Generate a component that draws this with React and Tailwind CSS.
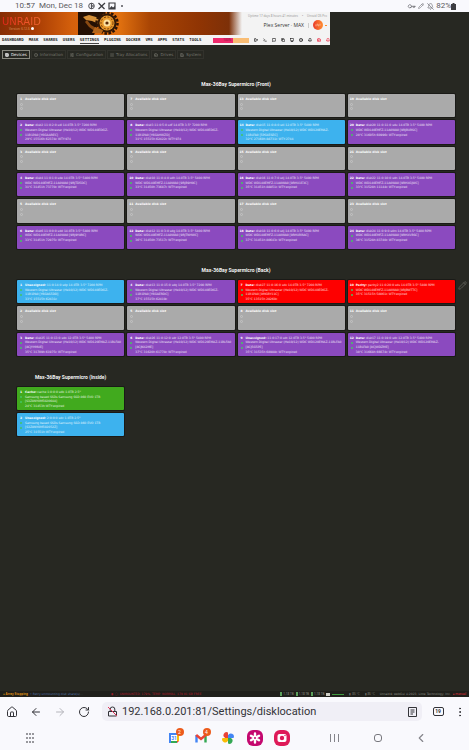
import React from "react";
import {
  Home, ArrowLeft, ArrowRight, RotateCw, MoreVertical, ChevronLeft, Pencil,
  LogOut, Terminal, MessageSquare, Copy, Monitor, Info, Bell, HardDrive,
  List, SlidersHorizontal, Grid3x3, Save, Key, BellOff,
} from "lucide-react";

const TONES = {
  empty: "bg-[#aaaaaa]",
  purple: "bg-[#8b4abf]",
  blue: "bg-[#3db2ee]",
  red: "bg-[#fe0000]",
  green: "bg-[#41aa1e]",
};

const e = (n) => ({ n, tone: "empty", label: "Available disk slot", lines: [""] });
const d = (n, tone, label, ...lines) => ({ n, tone, label, lines });

const HE10 = "Western Digital Ultrastar (He10/12) WDC WD140EDGZ-";

const front = [
  e(1), e(7), e(13), e(19),
  d(2, "purple", "Data:", 'disk2 11:0:2:0 sdl 14.0TB 3.5" 7200 RPM', HE10, "11B1PA0 [Y6GAAREC]", "29°C 15516h 62374c WTY:974"),
  d(8, "purple", "Data:", 'disk3 11:0:5:0 sdf 14.0TB 3.5" 7200 RPM', HE10, "11B1PA0 [Y6GAHWZD]", "31°C 15515h 62422c WTY:974"),
  d(14, "blue", "Data:", 'disk15 11:0:8:0 sdi 12.0TB 3.5" 5400 RPM', "Western Digital Ultrastar (He10/12) WDC WD120EMAZ-", "11BLFA0 [5PG4ESEC]", "32°C 27160h 88731c WTY:2744"),
  d(20, "purple", "Data:", 'disk20 11:0:11:0 sdu 14.0TB 3.5" 5400 RPM', "WDC WD140EMFZ-11A0WA0 [9RJBXRSC]", "28°C 31605h 60996c WTY:expired"),
  e(3), e(9), e(15), e(21),
  d(4, "purple", "Data:", 'disk4 11:0:1:0 sde 14.0TB 3.5" 5400 RPM', "WDC WD140EMFZ-11A0WA0 [9RJTD5DC]", "31°C 31451h 73770c WTY:expired"),
  d(10, "purple", "Data:", 'disk10 11:0:4:0 sdh 14.0TB 3.5" 5400 RPM', "WDC WD140EMFZ-11A0WA0 [9RJB9H0C]", "33°C 31450h 73687c WTY:expired"),
  d(16, "purple", "Data:", 'disk16 11:0:7:0 sdj 14.0TB 3.5" 5400 RPM', "WDC WD140EMFZ-11A0WA0 [9RHX1E3C]", "35°C 31451h 88851c WTY:expired"),
  d(22, "purple", "Data:", 'disk22 11:0:10:0 sdn 14.0TB 3.5" 5400 RPM', "WDC WD140EMFZ-11A0WA0 [9RHXGJWC]", "33°C 31528h 11144c WTY:expired"),
  e(5), e(11), e(17), e(23),
  d(6, "purple", "Data:", 'disk6 11:0:0:0 sdd 14.0TB 3.5" 5400 RPM', "WDC WD140EMFZ-11A0WA0 [9RJ9Y8RC]", "33°C 31451h 72975c WTY:expired"),
  d(12, "purple", "Data:", 'disk12 11:0:3:0 sdg 14.0TB 3.5" 5400 RPM', "WDC WD140EMFZ-11A0WA0 [9RJTNHWC]", "36°C 31450h 73517c WTY:expired"),
  d(18, "purple", "Data:", 'disk18 11:0:6:0 sdj 14.0TB 3.5" 5400 RPM', "WDC WD140EMFZ-11A0WA0 [9RHXRRAC]", "37°C 31451h 80643c WTY:expired"),
  d(24, "purple", "Data:", 'disk24 11:0:9:0 sdm 14.0TB 3.5" 5400 RPM', "WDC WD140EMFZ-11A0WA0 [9RHXVBSC]", "36°C 31528h 83740c WTY:expired"),
];

const back = [
  d(1, "blue", "Unassigned:", '11:0:14:0 sdp 14.0TB 3.5" 7200 RPM', HE10, "11B1PA0 [Y6GAS5DD]", "33°C 15515h 62431c"),
  d(4, "purple", "Data:", 'disk13 11:0:15:0 sdq 14.0TB 3.5" 7200 RPM', HE10, "11B1PA0 [Y6GAERDC]", "37°C 15515h 62419c"),
  d(7, "red", "Data:", 'disk27 11:0:16:0 sdv 14.0TB 3.5" 7200 RPM', HE10, "11B1PA0 [9MGBY11C]", "35°C 13515h 28260c"),
  d(10, "red", "Parity:", 'parity2 11:0:20:0 sds 14.0TB 3.5" 5400 RPM', "WDC WD140EMFZ-11A0WA0 [9RJBWTTC]", "35°C 31515h 58061c WTY:expired"),
  e(2), e(5), e(8), e(11),
  d(3, "purple", "Data:", 'disk25 11:0:13:0 sdo 12.0TB 3.5" 5400 RPM', "Western Digital Ultrastar (He10/12) WDC WD120EMAZ-11BLFA0", "[8CJYHMUE]", "35°C 31709h 61975c WTY:expired"),
  d(6, "purple", "Data:", 'disk26 11:0:12:0 sdr 12.0TB 3.5" 5400 RPM', "Western Digital Ultrastar (He10/12) WDC WD120EMAZ-11BLFA0", "[8CJNX2ME]", "37°C 31620h 61778c WTY:expired"),
  d(9, "purple", "Unassigned:", '11:0:17:0 sdt 12.0TB 3.5" 5400 RPM', "Western Digital Ultrastar (He10/12) WDC WD120EMAZ-11BLFA0", "[8CJ5G5PE]", "35°C 31535h 68988c WTY:expired"),
  d(12, "purple", "Data:", 'disk17 11:0:19:0 sdx 12.0TB 3.5" 5400 RPM', "Western Digital Ultrastar (He10/12) WDC WD120EMAZ-", "11BLFA0 [8CJWDZME]", "38°C 31668h 66674c WTY:expired"),
];

const inside = [
  d(1, "green", "Cache:", 'cache 1:0:0:0 sdb 1.0TB 2.5"', "Samsung based SSDs Samsung SSD 860 EVO 1TB", "[S3Z8NY0M502064A]", "24°C 31453h WTY:expired"),
  d(2, "blue", "Unassigned:", '2:0:0:0 sdc 1.0TB 2.5"', "Samsung based SSDs Samsung SSD 860 EVO 1TB", "[S3Z8NY0M502052Z]", "25°C 31551h WTY:expired"),
];

function Card({ disk }) {
  const empty = disk.tone === "empty";
  const led = empty ? "size-[3px] border border-[#c4c4c4]" : "size-[2px] bg-[#45c465]";
  return (
    <article className={`flex gap-[2px] overflow-hidden rounded-[1px] px-[2px] pt-[3px] font-['DejaVu_Sans',sans-serif] text-[3px] text-white/80 shadow-[0_0_0_1px_#1a1a17] ${TONES[disk.tone]}`}>
      <div className="grid h-[19px] w-[4px] shrink-0 grid-rows-4 items-center justify-items-center leading-none">
        <b className="text-white">{disk.n}</b>
        <span className={`rounded-full ${led}`} />
        <span className={`rounded-full ${led}`} />
      </div>
      <div className="grid h-[19px] min-w-0 grid-rows-4 items-center whitespace-nowrap leading-none">
        <p><b className="text-white">{disk.label}</b> {disk.lines[0]}</p>
        {disk.lines.slice(1).map((l, i) => <p key={i}>{l}</p>)}
      </div>
    </article>
  );
}

function Bay({ title, disks, grid }) {
  return (
    <section>
      <h2 className="mb-[5px] text-center font-[Roboto,sans-serif] text-[5px] font-bold leading-[9px] text-[#f2f2f2]">{title}</h2>
      <div className={`grid gap-[3px] ${grid}`}>
        {disks.map((k) => <Card key={k.n} disk={k} />)}
      </div>
    </section>
  );
}

function Gear() {
  return (
    <svg viewBox="0 0 48 23" className="h-[23px] w-[48px]" aria-hidden="true">
      <path d="M0 0H26L22 8L16 23H0Z" fill="#241004" />
      <path d="M5 5L11 3L18 5L24 9L21 12L14 9L8 8Z" fill="#d6913a" />
      <path d="M9 8L13 13L20 17L18 20L11 15L7 10Z" fill="#8a4a12" />
      <circle cx="29" cy="11" r="10.5" fill="none" stroke="#2c1404" strokeWidth="2.5" strokeDasharray="2.6 1.5" />
      <circle cx="29" cy="11" r="9.5" fill="#321806" />
      <circle cx="29" cy="11" r="7.5" fill="#e89a2c" />
      <circle cx="29" cy="11" r="6" fill="none" stroke="#7a3a08" strokeWidth="1" strokeDasharray="2 1.5" />
      <circle cx="29" cy="11" r="3.5" fill="#ffe3a0" />
      <circle cx="29" cy="11" r="1.6" fill="#5a2a08" />
      <path d="M14 21L17 15L25 18L24 21Z" fill="#b5651a" />
    </svg>
  );
}

function StatusBar() {
  return (
    <div className="flex h-[12px] items-center bg-[#f9f9fd] pl-[15px] pr-[13px] font-[Roboto,sans-serif] text-[8px] leading-none text-[#5a5a60]">
      <span>10:57</span>
      <span className="ml-[4px]">Mon, Dec 18</span>
      <svg viewBox="0 0 28 8" className="ml-[5px] h-[8px] w-[28px]" aria-hidden="true">
        <circle cx="3.5" cy="4" r="2.8" fill="none" stroke="#55555b" strokeWidth="1" />
        <path d="M3.5 1V7M5 3V5" stroke="#55555b" strokeWidth="1.2" />
        <path d="M10.5 1L16.5 7M17 1L10.5 7" stroke="#3d3d42" strokeWidth="1.3" />
        <path d="M21 1H27V7H21Z" fill="none" stroke="#3d3d42" strokeWidth="1.2" />
        <path d="M21 7L23.5 4L25 5.5L27 4V7Z" fill="#3d3d42" />
      </svg>
      <span className="ml-[5px] size-[2px] rounded-full bg-[#55555b]" />
      <span className="flex-1" />
      <Key className="size-[7px] rotate-45" />
      <Pencil className="ml-[3px] size-[6px]" />
      <BellOff className="ml-[3px] size-[7px]" />
      <span className="ml-[2px]">82%</span>
      <svg viewBox="0 0 5 7" className="h-[7px] w-[5px]" aria-hidden="true">
        <path d="M1.5 0H3.5V1H5V7H0V1H1.5Z" fill="#3d3d42" />
      </svg>
    </div>
  );
}

const MENU = ["DASHBOARD", "MASK", "SHARES", "USERS", "SETTINGS", "PLUGINS", "DOCKER", "VMS", "APPS", "STATS", "TOOLS"];
const TOOLS = [LogOut, Terminal, MessageSquare, Copy, Monitor, Info, Bell, HardDrive, Bell];

function Header() {
  return (
    <header className="w-[330px] bg-[#f3f3f3]">
      <div className="flex h-[23px]">
        <div className="flex h-full w-[242px] items-center bg-[linear-gradient(90deg,#862d05_0px,#a83c04_35px,#d4600c_72px,#e0700f_120px,#a94504_150px,#8f3403_200px,#7d3008_229px,#f3f3f3_242px)]">
          <div className="w-[78px] pl-[2px] leading-none">
            <div className="bg-gradient-to-r from-[#e2231a] to-[#ff9a4a] bg-clip-text font-['DejaVu_Sans'] text-[10px] leading-[10px] text-transparent">UNRAID</div>
            <div className="flex items-center gap-[1px] pl-[7px] text-[3px] leading-[4px] text-[#d9935c]">Version: 6.12.6 <span className="size-[3px] rounded-full bg-white" /></div>
          </div>
          <Gear />
        </div>
        <div className="flex flex-1 flex-col items-end pr-[3px] text-[3px] text-[#999]">
          <div className="mt-[2px] flex gap-[4px] whitespace-nowrap leading-[4px]"><span>Uptime 17 days 8 hours 41 minutes</span><span>•</span><span>Unraid OS Pro</span></div>
          <div className="mt-[2px] flex items-center gap-[4px] whitespace-nowrap font-['Open_Sans'] text-[5px] leading-[10px] text-[#333]">
            <span>Plex Server · MAX</span>
            <span className="h-[5px] w-px bg-[#ccc]" />
            <span className="flex items-center gap-[2px]">
              <button aria-label="Account" className="flex size-[10px] items-center justify-center rounded-full bg-gradient-to-r from-[#e9382a] to-[#ff8c2f]">
                <svg viewBox="0 0 8 6" className="h-[4px] w-[6px]" fill="none" stroke="#ffd0b0" strokeWidth="1"><path d="M1 2V5M3 1V4M5 2V5M7 1V4" /></svg>
              </button>
              <span className="h-px w-[2px] bg-[#ff8c2f]" />
            </span>
          </div>
        </div>
      </div>
      <div className="flex h-[10px] items-center pl-[2px]">
        <nav className="flex gap-[5px] font-['DejaVu_Sans_Mono'] text-[4px] font-bold leading-[6px] text-[#222]">
          {MENU.map((m) => (
            <a key={m} href={`#${m}`} className={m === "SETTINGS" ? "border-b border-[#444]" : "border-b border-transparent"}>{m}</a>
          ))}
        </nav>
        <div className="ml-auto flex h-[5px] w-[36px] text-[3px] leading-[5px]">
          <span className="w-[20px] bg-[#ee2a6c] pr-[2px] text-right text-[#7a1236]">100%</span>
          <span className="flex-1 bg-[#f9bd74]" />
        </div>
        <div className="ml-[4px] flex gap-[4px] text-[#222]">
          {TOOLS.map((I, i) => (
            <button key={i} aria-label={`Tool ${i + 1}`} className="flex w-[5px] items-center justify-center">
              <I className={`size-[4px] ${i > 6 ? "text-[#ee3a50]" : ""}`} strokeWidth={4} />
            </button>
          ))}
        </div>
      </div>
    </header>
  );
}

const TABS = [["Devices", Grid3x3], ["Information", Info], ["Configuration", SlidersHorizontal], ["Tray Allocations", List], ["Drives", HardDrive], ["System", Save]];

function Tabs() {
  return (
    <div role="tablist" className="mt-[5px] flex gap-px pl-[2px] font-['DejaVu_Sans',sans-serif]">
      {TABS.map(([t, I], i) => (
        <button key={t} role="tab" aria-selected={i === 0}
          className={`flex h-[9px] items-center gap-[2px] border px-[2px] text-[4px] leading-none ${i === 0 ? "border-[#8a8a80] text-[#f2f2f2]" : "border-[#32322c] text-[#77776f]"}`}>
          <I className="size-[4px]" strokeWidth={3} />{t}
        </button>
      ))}
    </div>
  );
}

function Footer() {
  return (
    <footer className="flex h-[6px] items-center whitespace-nowrap bg-[#1f1f1b] px-[3px] text-[3px] leading-[6px]">
      <b className="text-[#d98a14]">● Array Stopping</b>
      <span className="ml-[2px] font-['DejaVu_Sans',sans-serif] text-[#4f6fa5]">• Retry unmounting disk share(s)...</span>
      <span className="ml-[28px] font-['DejaVu_Sans',sans-serif] text-[#b01c2c]">◉ ◯ &nbsp;UNMOUNTED: 179%, TEMP: NORMAL, 179.01 GB FREE</span>
      <span className="ml-auto flex items-center gap-[2px] text-[#8c8c84]">
        {[0, 1, 2].map((k) => <span key={k} className="flex items-center gap-[1px]"><span className="h-[4px] w-[2px] bg-[#5ba05b]" />1.18 TB</span>)}
        <span className="h-[3px] w-[4px] bg-[#d0d0c8]" /><span className="h-px w-[12px] bg-[#3f9a3f]" />
      </span>
      <span className="ml-[5px] text-[#77776f]">▮ 86 °C</span>
      <span className="ml-[5px] text-[#77776f]">▮ 86 °C</span>
      <span className="ml-[5px] font-['DejaVu_Sans',sans-serif] text-[#8c8c84]">Unraid® webGui ©2023, Lime Technology, Inc.</span>
      <a href="#manual" className="ml-[2px] text-[#e0303c]">● manual</a>
    </footer>
  );
}

function Browser() {
  return (
    <div className="flex h-[29px] items-center bg-[#f9f9fd] pr-[3px] text-[#333338]">
      {[Home, ArrowLeft, ArrowRight, RotateCw].map((I, i) => (
        <button key={i} aria-label={["Home", "Back", "Forward", "Reload"][i]} className="flex w-[24px] justify-center">
          <I className={`size-[12px] ${i === 2 ? "text-[#b5b5bb]" : ""}`} strokeWidth={2} />
        </button>
      ))}
      <div className="ml-[6px] flex h-[19px] flex-1 items-center rounded-[5px] bg-[#f0eff6] pl-[5px] pr-[5px]">
        <svg viewBox="0 0 11 11" className="size-[11px]" fill="none" stroke="#333338" aria-hidden="true">
          <path d="M1.5 5.5H9.5V10H1.5ZM3.2 5.5V3Q3.2 1 5.5 1Q7.8 1 7.8 3V5.5" />
          <path d="M1 1L10 10" stroke="#dd3355" />
        </svg>
        <input aria-label="Address" readOnly defaultValue="192.168.0.201:81/Settings/disklocation" className="ml-[4px] min-w-0 flex-1 bg-transparent font-[Roboto,sans-serif] text-[11px] leading-[15px] text-[#333338] outline-none" />
        <svg viewBox="0 0 9 10" className="h-[10px] w-[9px]" fill="none" stroke="#333338" aria-hidden="true">
          <path d="M0.5 0.5H8.5V9.5H0.5ZM2.5 3H6.5M2.5 5H6.5M2.5 7H5" />
        </svg>
      </div>
      <button aria-label="Tabs" className="flex w-[32px] justify-center">
        <span className="flex h-[9px] w-[11px] items-center justify-center rounded-[2px] border border-[#333338] font-[Roboto,sans-serif] text-[5px] font-bold leading-none">19</span>
      </button>
      <button aria-label="Menu" className="flex w-[12px] justify-center"><MoreVertical className="size-[12px]" /></button>
    </div>
  );
}

function Badge({ n }) {
  return <span className="absolute -right-[4px] -top-[4px] flex size-[8px] items-center justify-center rounded-full bg-[#ec5b1c] font-[Roboto,sans-serif] text-[5px] leading-none text-white">{n}</span>;
}

function Dock() {
  return (
    <nav className="flex h-[24px] items-center bg-[#f9f9fd] pl-[24px]">
      <button aria-label="Apps" className="grid w-[12px] grid-cols-3 justify-items-center gap-y-[2px] px-[1px]">
        {Array.from({ length: 9 }, (_, i) => <span key={i} className="size-[2px] rounded-full bg-[#77777d]" />)}
      </button>
      <div className="ml-[124px] grid w-[135px] grid-cols-5 items-center justify-items-center">
        <button aria-label="Calendar" className="relative">
          <svg viewBox="0 0 12 12" className="size-[12px]">
            <path d="M1 1H11V8L8 11H1Z" fill="#4285f4" /><path d="M9 3H11V9H9Z" fill="#fbbc04" /><path d="M3 9H9V11H3Z" fill="#34a853" /><path d="M9 9H11L9 11Z" fill="#ea4335" /><path d="M3 3H9V9H3Z" fill="#fff" />
            <text x="6" y="8" fontSize="5" fontFamily="Roboto" fontWeight="700" textAnchor="middle" fill="#4285f4">31</text>
          </svg>
          <Badge n="2" />
        </button>
        <button aria-label="Mail" className="relative">
          <svg viewBox="0 0 12 12" className="size-[12px]" fill="none" strokeWidth="2.4">
            <path d="M1.5 10.5V3" stroke="#4285f4" /><path d="M10.5 10.5V3" stroke="#34a853" /><path d="M1.2 3L6 7L10.8 3" stroke="#ea4335" />
          </svg>
          <Badge n="4" />
        </button>
        <button aria-label="Photos">
          <svg viewBox="0 0 12 12" className="size-[12px]">
            <path d="M6 6V0.5A2.8 2.8 0 0 0 3.2 6Z" fill="#ea4335" /><path d="M6 6H11.5A2.8 2.8 0 0 0 6 3.2Z" fill="#4285f4" /><path d="M6 6V11.5A2.8 2.8 0 0 0 8.8 6Z" fill="#34a853" /><path d="M6 6H0.5A2.8 2.8 0 0 0 6 8.8Z" fill="#fbbc04" />
          </svg>
        </button>
        <button aria-label="Gallery">
          <svg viewBox="0 0 16 16" className="size-[16px]">
            <rect width="16" height="16" rx="6" fill="#c4086f" />
            <path d="M8 3.5V12.5M4 5.8L12 10.2M12 5.8L4 10.2" stroke="#fff" strokeWidth="2.4" strokeLinecap="round" /><circle cx="8" cy="8" r="1" fill="#c4086f" />
          </svg>
        </button>
        <button aria-label="Camera">
          <svg viewBox="0 0 16 16" className="size-[16px]">
            <rect width="16" height="16" rx="6" fill="#de1a58" />
            <rect x="3.5" y="4" width="9" height="8" rx="2" fill="#fff" /><circle cx="8" cy="8" r="2.2" fill="#de1a58" /><circle cx="11" cy="5.5" r="0.7" fill="#de1a58" />
          </svg>
        </button>
      </div>
      <div className="ml-[18px] grid w-[130px] grid-cols-3 items-center justify-items-center text-[#85858b]">
        <button aria-label="Recents" className="flex h-[8px] items-stretch gap-[3px]"><i className="w-px bg-[#85858b]" /><i className="w-px bg-[#85858b]" /><i className="w-px bg-[#85858b]" /></button>
        <button aria-label="Home screen" className="size-[8px] rounded-[3px] border border-[#77777d]" />
        <button aria-label="Go back" className="flex items-center"><ChevronLeft className="h-[14px] w-[14px]" strokeWidth={2} /></button>
      </div>
    </nav>
  );
}

export default function App() {
  return (
    <div className="relative flex min-h-screen flex-col bg-[#272822] font-['Noto_Sans',sans-serif]">
      <StatusBar />
      <Header />
      <Tabs />
      <main className="mt-[21px] flex flex-1 flex-col gap-[17px] pl-[17px] pr-[14px]">
        <Bay title="Max-36Bay Supermicro (Front)" disks={front} grid="h-[155px] grid-cols-4 grid-rows-6" />
        <Bay title="Max-36Bay Supermicro (Back)" disks={back} grid="h-[76px] grid-cols-4 grid-rows-3" />
        <div className="grid grid-cols-4 gap-[3px]">
          <Bay title="Max-36Bay Supermicro (Inside)" disks={inside} grid="h-[49px] grid-rows-2" />
        </div>
      </main>
      <button aria-label="Edit" className="absolute right-[2px] top-[281px] text-[#66665e]"><Pencil className="size-[9px]" /></button>
      <Footer />
      <Browser />
      <Dock />
    </div>
  );
}
